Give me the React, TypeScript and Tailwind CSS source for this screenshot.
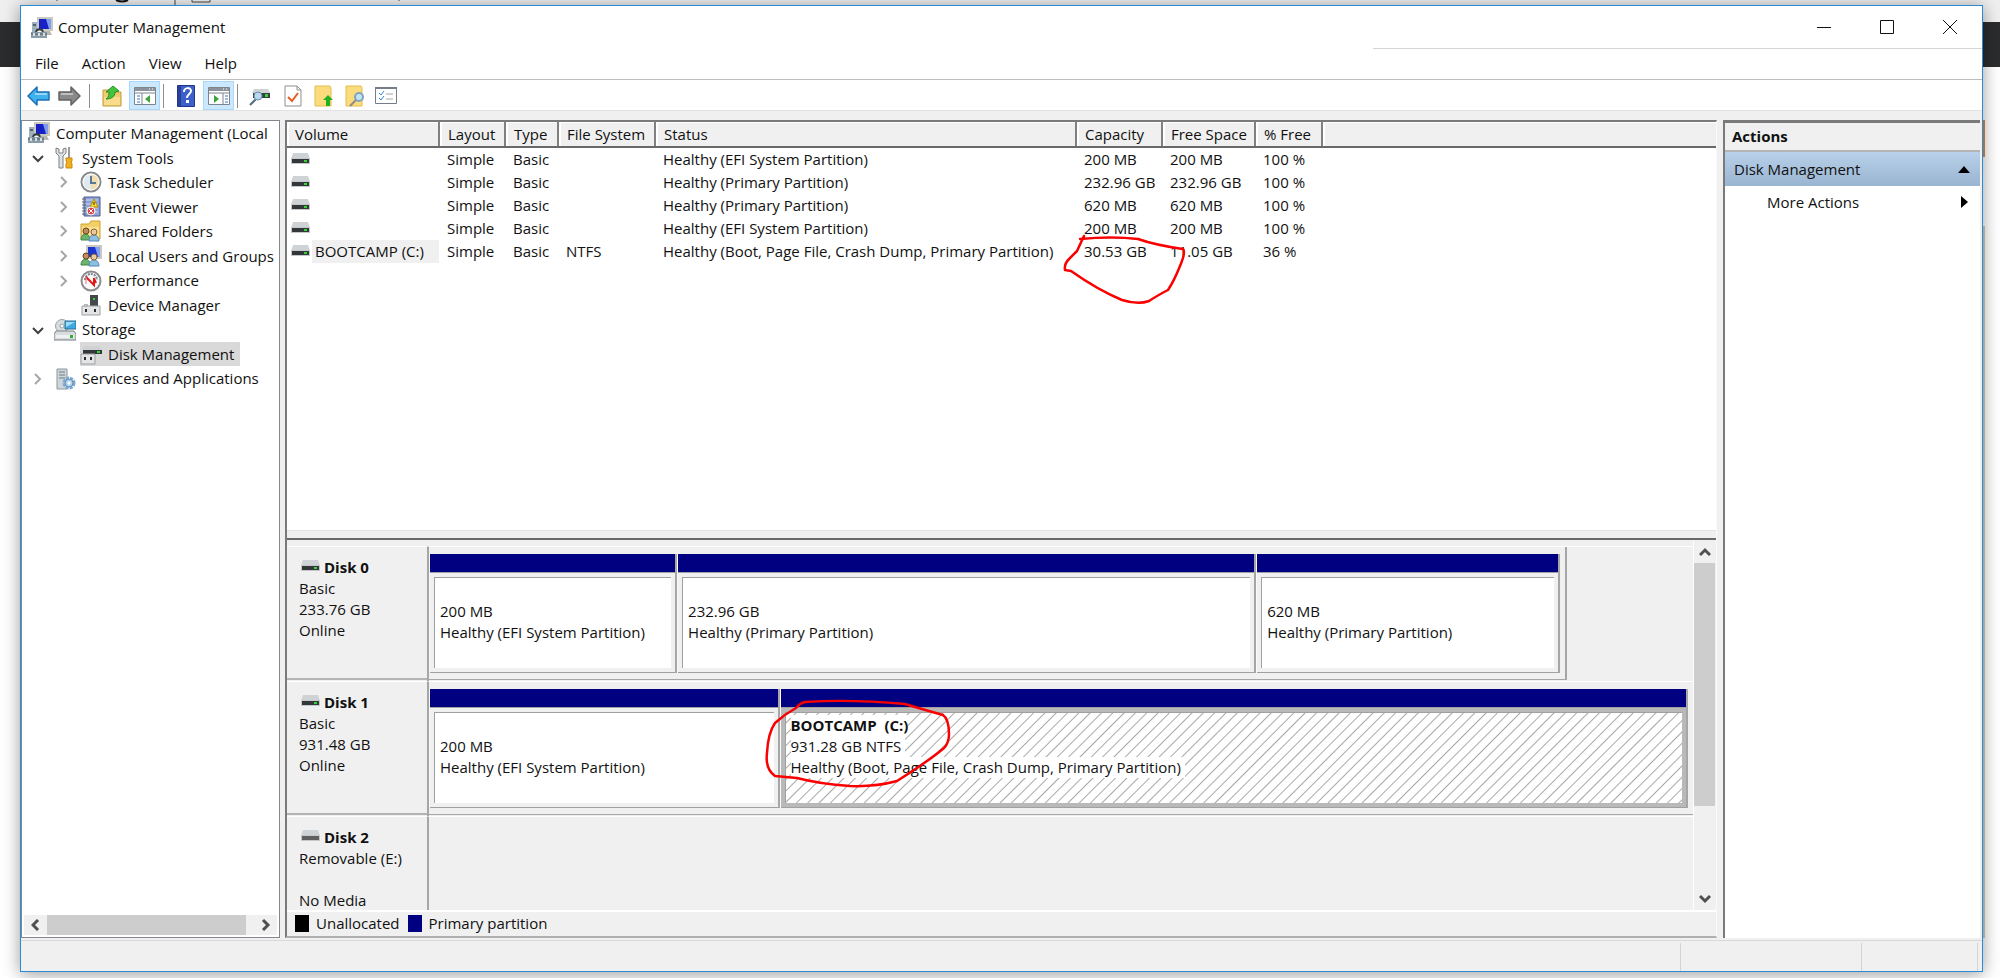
import type { ReactNode } from 'react';

const volumes = [
  { name: '', fs: '', status: 'Healthy (EFI System Partition)', capacity: '200 MB', free: '200 MB', percent: '100 %' },
  { name: '', fs: '', status: 'Healthy (Primary Partition)', capacity: '232.96 GB', free: '232.96 GB', percent: '100 %' },
  { name: '', fs: '', status: 'Healthy (Primary Partition)', capacity: '620 MB', free: '620 MB', percent: '100 %' },
  { name: '', fs: '', status: 'Healthy (EFI System Partition)', capacity: '200 MB', free: '200 MB', percent: '100 %' },
  { name: 'BOOTCAMP (C:)', fs: 'NTFS', status: 'Healthy (Boot, Page File, Crash Dump, Primary Partition)', capacity: '30.53 GB', free: '11.05 GB', percent: '36 %' },
];

const columns = ['Volume', 'Layout', 'Type', 'File System', 'Status', 'Capacity', 'Free Space', '% Free', ''];

function ComputerIcon() {
  return (
    <svg width="22" height="22" viewBox="0 0 22 22" className="shrink-0">
      <path d="M6 0h16v14H6z" fill="#c9c9bd" />
      <path d="M8 2h12v10H8z" fill="#1620c4" />
      <path d="M15 2h5v10h-2z" fill="#7f9bf0" />
      <path d="M13 14h6l2 4h-8z" fill="#b9b9b0" />
      <path d="M1 5h5v11H1z" fill="#9fb0bd" />
      <path d="M2 7h3v2H2z" fill="#4d6676" />
      <path d="M5 16c0-5 7-5 7 0" fill="none" stroke="#333c44" strokeWidth="2" />
      <path d="M0 15h16v6H0z" fill="#8a9ca7" />
      <path d="M0 17h16" stroke="#4f606b" />
      <path d="M3 16v3M8 16v3M13 16v3" stroke="#d7e0e6" strokeWidth="2" />
    </svg>
  );
}

function ToolsIcon() {
  return (
    <svg width="22" height="22" viewBox="0 0 22 22" className="shrink-0">
      <path d="M2 1v5l3 3v12h4V9l3-3V1l-3 1v4H5V2z" fill="#dfe1e3" stroke="#7d8185" />
      <path d="M14 0h2v11h-2z" fill="#9a9a9a" />
      <path d="M12 11h6v3l-1 1 1 2v4h-6v-4l1-2-1-1z" fill="#f2b01e" stroke="#c98708" />
    </svg>
  );
}

function ClockIcon() {
  return (
    <svg width="22" height="22" viewBox="0 0 22 22" className="shrink-0">
      <circle cx="11" cy="11" r="9.5" fill="#dfe9f2" stroke="#87898b" strokeWidth="2" />
      <path d="M11 11V3a8 8 0 0 1 0 16z" fill="#f3deb0" />
      <circle cx="11" cy="11" r="8" fill="none" stroke="#fff" />
      <path d="M11 5v7h5" fill="none" stroke="#5d7892" strokeWidth="2" />
    </svg>
  );
}

function EventIcon() {
  return (
    <svg width="22" height="22" viewBox="0 0 22 22" className="shrink-0">
      <path d="M4 1h16v19H4z" fill="#8fa3d4" stroke="#4a5a91" />
      <path d="M6 4h12M6 8h12M6 12h12M6 16h12" stroke="#cdd8f2" />
      <path d="M2 3h4M2 6h4M2 9h4M2 12h4M2 15h4M2 18h4" stroke="#5c6675" />
      <path d="M14 3l4 8h-8z" fill="#ffd92e" stroke="#b08a00" />
      <path d="M14 6v3" stroke="#222" />
      <circle cx="11" cy="15" r="4" fill="#d84545" stroke="#fff" />
      <path d="M9 13l4 4M13 13l-4 4" stroke="#fff" />
    </svg>
  );
}

function People() {
  return (
    <>
      <path d="M1 20c0-8 9-8 9 0z" fill="#69b56d" stroke="#3f8347" />
      <path d="M9 21c0-8 10-8 10 0z" fill="#8dbfe3" stroke="#5588b3" />
      <circle cx="6" cy="11" r="3" fill="#c48d57" stroke="#66441f" />
      <circle cx="14" cy="12" r="3" fill="#edc9a0" stroke="#86602f" />
    </>
  );
}

function SharedIcon() {
  return (
    <svg width="22" height="22" viewBox="0 0 22 22" className="shrink-0">
      <path d="M1 4h8l2-3h9v18H1z" fill="#f3cf67" stroke="#d1a12e" />
      <path d="M2 7h17v11H2z" fill="#fbe192" />
      <People />
    </svg>
  );
}

function UsersIcon() {
  return (
    <svg width="22" height="22" viewBox="0 0 22 22" className="shrink-0">
      <path d="M6 0h16v14H6z" fill="#c9c9bd" />
      <path d="M8 2h12v10H8z" fill="#1c35cf" />
      <path d="M15 2h5v10h-2z" fill="#85a1f4" />
      <People />
    </svg>
  );
}

function PerformanceIcon() {
  return (
    <svg width="22" height="22" viewBox="0 0 22 22" className="shrink-0">
      <circle cx="11" cy="11" r="9.5" fill="#fbfbfb" stroke="#8a8c8e" strokeWidth="2" />
      <path d="M5 10a6 6 0 0 1 12 0" fill="none" stroke="#7d868d" strokeWidth="2" strokeDasharray="2 1" />
      <path d="M6 7l8 8V8l2 5" fill="none" stroke="#e01a1a" strokeWidth="2" />
      <path d="M6 7v7" stroke="#e87070" />
    </svg>
  );
}

function DeviceIcon() {
  return (
    <svg width="22" height="22" viewBox="0 0 22 22" className="shrink-0">
      <path d="M10 1h8v11h-8z" fill="#44484b" />
      <path d="M13 4h2v2h-2z" fill="#35d435" />
      <path d="M2 12h18v9H2z" fill="#e3e4e5" stroke="#9da0a3" />
      <path d="M4 10h4v3H4z" fill="#b6babd" />
      <path d="M5 15h2v3H5zM14 15h2v3h-2z" fill="#2b2b2b" />
    </svg>
  );
}

function StorageIcon() {
  return (
    <svg width="22" height="22" viewBox="0 0 22 22" className="shrink-0">
      <circle cx="8" cy="7" r="6.5" fill="#d5dde0" stroke="#98a2a7" />
      <circle cx="8" cy="7" r="2" fill="#f8f8f8" stroke="#98a2a7" />
      <path d="M11 2h11v8H11z" fill="#3fa9dd" stroke="#2c6f96" />
      <path d="M12 3h9l-9 5z" fill="#9bdcf7" />
      <path d="M2 12h18l2 3v6H0v-6z" fill="#d9dcde" stroke="#7b8083" />
      <path d="M2 16h18v3H2z" fill="#eff1f2" />
      <path d="M16 16h3v3h-3z" fill="#2fae2f" />
    </svg>
  );
}

function DiskMgmtIcon() {
  return (
    <svg width="22" height="22" viewBox="0 0 22 22" className="shrink-0">
      <path d="M4 3h16l2 4H2z" fill="#cfd2d4" />
      <path d="M3 7h19v4H3z" fill="#33373a" />
      <path d="M17 8h3v2h-3z" fill="#35d435" />
      <path d="M1 11h14v10H1z" fill="#e3e4e5" stroke="#9da0a3" />
      <path d="M4 14h2v3H4zM10 14h2v3h-2z" fill="#2b2b2b" />
    </svg>
  );
}

function ServicesIcon() {
  return (
    <svg width="22" height="22" viewBox="0 0 22 22" className="shrink-0">
      <path d="M3 1h10v20H3z" fill="#cdd6da" stroke="#8b979d" />
      <path d="M5 4h6M5 7h6M5 10h6" stroke="#6b7a82" />
      <circle cx="15" cy="15" r="5" fill="none" stroke="#7fa9cf" strokeWidth="3" strokeDasharray="3 1" />
      <circle cx="15" cy="15" r="4" fill="#b6d2ea" stroke="#5e8fbc" />
      <circle cx="15" cy="15" r="1.5" fill="#fff" />
    </svg>
  );
}

function DriveIcon({ off }: { off?: boolean }) {
  return (
    <svg width="19" height="12" viewBox="0 0 19 12" className="shrink-0">
      <path d="M2 0h15l2 6H0z" fill="#cfd3d6" />
      <path d="M0 5h19v6H0z" fill="#c5c8ca" />
      <path d="M1 6h17v4H1z" fill={off ? '#606060' : '#33373a'} />
      {!off && <path d="M13 7h3v2h-3z" fill="#35d435" />}
    </svg>
  );
}

function Chevron({ open }: { open?: boolean }) {
  return (
    <svg width="14" height="14" viewBox="0 0 14 14" className="shrink-0">
      {open ? (
        <path d="M2 5l5 5 5-5" fill="none" stroke="#404040" strokeWidth="2" />
      ) : (
        <path d="M4 2l5 5-5 5" fill="none" stroke="#a6a6a6" strokeWidth="2" />
      )}
    </svg>
  );
}

function Arrow({ color, edge, flip }: { color: string; edge: string; flip?: boolean }) {
  return (
    <svg width="23" height="20" viewBox="0 0 23 20">
      <path
        d={flip ? 'M22 10l-9-9v5H1v8h12v5z' : 'M1 10l9-9v5h12v8H10v5z'}
        fill={color}
        stroke={edge}
        strokeWidth="1.5"
        strokeLinejoin="round"
      />
      <path d={flip ? 'M3 8h12' : 'M8 8h12'} stroke="#fff" strokeOpacity=".45" strokeWidth="2" />
    </svg>
  );
}

function PaneIcon({ right }: { right?: boolean }) {
  return (
    <svg width="22" height="18" viewBox="0 0 22 18">
      <path d="M.5.5h21v17H.5z" fill="#fff" stroke="#7c848e" />
      <path d="M1 1h20v3H1z" fill="#8b939d" />
      <path d="M15 2h1M18 2h1" stroke="#fff" />
      <path d="M1 6h20" stroke="#7c848e" />
      {right ? (
        <>
          <path d="M15 6v12" stroke="#7c848e" />
          <path d="M17 9h3M17 12h3M17 15h3" stroke="#3878c8" />
          <path d="M6 8l5 4-5 4z" fill="#3aa63a" />
        </>
      ) : (
        <>
          <path d="M8 6v12" stroke="#7c848e" />
          <path d="M3 9h3M3 12h3M3 15h3" stroke="#3878c8" />
          <path d="M16 8l-5 4 5 4z" fill="#3aa63a" />
        </>
      )}
    </svg>
  );
}

function ToolButton({ label, wide, active, children }: { label: string; wide?: boolean; active?: boolean; children: ReactNode }) {
  return (
    <button
      aria-label={label}
      className={`flex items-center justify-center self-stretch shrink-0 ${wide ? 'w-[35px]' : 'w-[31px]'} ${active ? 'bg-[#cce8ff] border border-[#a9d6fb]' : ''}`}
    >
      {children}
    </button>
  );
}

function Separator() {
  return <div className="w-px h-6 bg-[#8d8d8d] shrink-0" />;
}

function Toolbar() {
  return (
    <div className="flex items-center h-[31px] pl-[2px] pt-px border-b border-[#e2e2e2] shrink-0">
      <ToolButton label="Back"><Arrow color="#3fb2ee" edge="#1c70b8" /></ToolButton>
      <ToolButton label="Forward"><Arrow color="#8a8a8a" edge="#636363" flip /></ToolButton>
      <div className="w-1" />
      <Separator />
      <div className="w-1" />
      <ToolButton label="Up" wide>
        <svg width="20" height="22" viewBox="0 0 20 22">
          <path d="M1 5h6l2 2h10v14H1z" fill="#eecb6c" stroke="#c59c39" />
          <path d="M2 12h16v8H2z" fill="#f8dc8c" />
          <path d="M4 14c3-2 3-4 3-7H4l7-6 6 5-4 1c0 5-4 7-9 7z" fill="#43c23b" stroke="#26902a" />
        </svg>
      </ToolButton>
      <ToolButton label="Show console tree" active><PaneIcon /></ToolButton>
      <div className="w-[3px]" />
      <Separator />
      <div className="w-1" />
      <ToolButton label="Help" wide>
        <svg width="18" height="22" viewBox="0 0 18 22">
          <path d="M.5.5h17v21H.5z" fill="#3c5fc9" stroke="#22358a" />
          <path d="M1 1h3v20H1z" fill="#274099" />
          <path d="M7 7c0-5 7-5 7-1 0 3-4 3-4 7" fill="none" stroke="#fff" strokeWidth="2" />
          <path d="M9 15h3v3H9z" fill="#fff" />
        </svg>
      </ToolButton>
      <ToolButton label="Show action pane" active><PaneIcon right /></ToolButton>
      <div className="w-[3px]" />
      <Separator />
      <div className="w-1" />
      <ToolButton label="Rescan disks" wide>
        <svg width="22" height="20" viewBox="0 0 22 20">
          <path d="M5 3h14l2 4H3z" fill="#cfd3d6" />
          <path d="M4 7h17v5H4z" fill="#3a3e41" />
          <path d="M16 8h3v3h-3z" fill="#35d435" />
          <path d="M7 13l-6 6" stroke="#4f6b7f" strokeWidth="2" />
          <circle cx="9" cy="10" r="4" fill="#b7d8ee" stroke="#678fac" />
        </svg>
      </ToolButton>
      <ToolButton label="Properties">
        <svg width="18" height="22" viewBox="0 0 18 22">
          <path d="M1 1h12l4 4v16H1z" fill="#fff" stroke="#8f8f8f" />
          <path d="M13 1v4h4" fill="none" stroke="#8f8f8f" />
          <path d="M4 12l4 4 6-8" fill="none" stroke="#ea5a24" strokeWidth="2" />
        </svg>
      </ToolButton>
      <ToolButton label="Attach folder">
        <svg width="20" height="22" viewBox="0 0 20 22">
          <path d="M1 1h15l1 2v18H1z" fill="#fbdc7c" stroke="#e6bd4c" />
          <path d="M12 21v-6H9l5-5 5 5h-3v6z" fill="#22b01f" />
        </svg>
      </ToolButton>
      <ToolButton label="Find">
        <svg width="20" height="22" viewBox="0 0 20 22">
          <path d="M1 1h15l1 2v18H1z" fill="#fbdc7c" stroke="#e6bd4c" />
          <path d="M11 15l-6 6" stroke="#8c8c8c" strokeWidth="2" />
          <circle cx="14" cy="12" r="4" fill="#c6e4f4" stroke="#7fa5bb" strokeWidth="2" />
        </svg>
      </ToolButton>
      <ToolButton label="Options">
        <svg width="22" height="17" viewBox="0 0 22 17">
          <path d="M.5.5h21v16H.5z" fill="#fff" stroke="#757d86" />
          <path d="M0 1h22" stroke="#757d86" strokeWidth="2" />
          <path d="M4 6l2 2 3-4M4 11l2 2 3-4" fill="none" stroke="#2f86d8" />
          <path d="M11 7h7M11 12h7" stroke="#a5a5a5" />
        </svg>
      </ToolButton>
    </div>
  );
}

function TreeRow({ label, icon, level, state, selected }: { label: string; icon: ReactNode; level: number; state?: 'open' | 'closed'; selected?: boolean }) {
  const indent = ['pl-[6px]', 'pl-[9px]', 'pl-[35px]'][level];
  return (
    <li className={`flex items-center whitespace-nowrap min-h-0 ${indent}`}>
      {level > 0 && <span className="w-[14px] mr-[9px] shrink-0">{state && <Chevron open={state === 'open'} />}</span>}
      <span className={`flex items-center gap-[6px] h-6 pr-[6px] ${selected ? 'bg-[#d9d9d9]' : ''}`}>
        {icon}
        {label}
      </span>
    </li>
  );
}

function Tree() {
  return (
    <nav aria-label="Console tree" className="w-[259px] shrink-0 flex flex-col bg-white border border-[#828790] overflow-hidden">
      <ul className="grid auto-rows-fr h-[270px]">
        <TreeRow level={0} label="Computer Management (Local" icon={<ComputerIcon />} />
        <TreeRow level={1} state="open" label="System Tools" icon={<ToolsIcon />} />
        <TreeRow level={2} state="closed" label="Task Scheduler" icon={<ClockIcon />} />
        <TreeRow level={2} state="closed" label="Event Viewer" icon={<EventIcon />} />
        <TreeRow level={2} state="closed" label="Shared Folders" icon={<SharedIcon />} />
        <TreeRow level={2} state="closed" label="Local Users and Groups" icon={<UsersIcon />} />
        <TreeRow level={2} state="closed" label="Performance" icon={<PerformanceIcon />} />
        <TreeRow level={2} label="Device Manager" icon={<DeviceIcon />} />
        <TreeRow level={1} state="open" label="Storage" icon={<StorageIcon />} />
        <TreeRow level={2} selected label="Disk Management" icon={<DiskMgmtIcon />} />
        <TreeRow level={1} state="closed" label="Services and Applications" icon={<ServicesIcon />} />
      </ul>
      <div className="mt-auto mb-[2px] mx-[2px] flex h-5 bg-[#f0f0f0]">
        <button aria-label="Scroll left" className="w-[23px] flex items-center justify-center">
          <svg width="10" height="12" viewBox="0 0 10 12"><path d="M7 1L2 6l5 5" fill="none" stroke="#505050" strokeWidth="3" /></svg>
        </button>
        <div className="flex-1 bg-[#cdcdcd] mr-2" />
        <button aria-label="Scroll right" className="w-[23px] flex items-center justify-center">
          <svg width="10" height="12" viewBox="0 0 10 12"><path d="M2 1l5 5-5 5" fill="none" stroke="#505050" strokeWidth="3" /></svg>
        </button>
      </div>
    </nav>
  );
}

function VolumeList() {
  return (
    <div className="h-[408px] shrink-0 bg-white overflow-hidden">
      <table className="table-fixed w-full border-collapse text-left whitespace-nowrap">
        <colgroup>
          <col className="w-[152px]" />
          <col className="w-[66px]" />
          <col className="w-[53px]" />
          <col className="w-[97px]" />
          <col className="w-[421px]" />
          <col className="w-[86px]" />
          <col className="w-[93px]" />
          <col className="w-[67px]" />
          <col />
        </colgroup>
        <thead>
          <tr className="h-[25px] bg-[#f0f0f0]">
            {columns.map((c, i) => (
              <th key={i} className="p-0 pl-2 font-normal border-b-2 border-b-[#696969] border-r-2 border-r-[#808080] last:border-r-0 shadow-[inset_2px_1px_0_#fff]">
                {c}
              </th>
            ))}
          </tr>
        </thead>
        <tbody>
          {volumes.map((v, i) => (
            <tr key={i} className="h-[23px]">
              <td className="p-0 pl-1">
                <div className="flex items-center gap-[2px]">
                  <DriveIcon />
                  {v.name && <span className="bg-[#f0f0f0] flex-1 pl-[3px] leading-[23px]">{v.name}</span>}
                </div>
              </td>
              <td className="p-0 pl-2">Simple</td>
              <td className="p-0 pl-2">Basic</td>
              <td className="p-0 pl-2">{v.fs}</td>
              <td className="p-0 pl-2">{v.status}</td>
              <td className="p-0 pl-2">{v.capacity}</td>
              <td className="p-0 pl-2">{v.free}</td>
              <td className="p-0 pl-2">{v.percent}</td>
              <td className="p-0" />
            </tr>
          ))}
        </tbody>
      </table>
    </div>
  );
}

function Partition({ grow, title, size, status, selected }: { grow: string; title?: string; size: string; status: string; selected?: boolean }) {
  return (
    <div className={`${grow} min-w-0 flex flex-col border-l border-l-[#fafafa] border-r-2 border-r-[#a6a6a6]`}>
      <div className="h-[18px] bg-[#000080]" />
      <div className={`h-[101px] border-y border-[#a0a0a0] p-1 ${selected ? 'bg-[#b9b9b9]' : 'bg-[#f0f0f0]'}`}>
        <div
          className={`h-full flex flex-col items-start pt-[2px] pl-[5px] border-t border-l border-[#a0a0a0] whitespace-nowrap leading-[21px] ${selected ? 'bg-[repeating-linear-gradient(135deg,#fff_0px,#fff_6px,#a8a8a8_7px,#fff_8px)]' : 'bg-white'}`}
        >
          <span className="h-[21px] bg-white font-bold whitespace-pre">{title}</span>
          <span className="h-[21px] bg-white pr-1">{size}</span>
          <span className="h-[21px] bg-white pr-1">{status}</span>
        </div>
      </div>
    </div>
  );
}

function DiskRow({ name, lines, off, frame, children }: { name: string; lines: string[]; off?: boolean; frame?: string; children?: ReactNode }) {
  return (
    <div className="h-[135px] flex shrink-0">
      <div className="w-[140px] shrink-0 h-[134px] pl-3 pt-[10px] border-t border-t-white border-b-2 border-b-[#b4b4b4] leading-[21px] whitespace-nowrap">
        <div className="flex items-center gap-1 font-bold pl-[2px]">
          <span className="pb-1"><DriveIcon off={off} /></span>
          {name}
        </div>
        {lines.map((l, i) => (
          <div key={i} className="h-[21px]">{l}</div>
        ))}
      </div>
      <div className="flex-1 min-w-0 border-l-2 border-l-[#a6a6a6] border-t border-t-white">
        {children && <div className={`h-[133px] flex items-start pt-[7px] border-b border-[#a6a6a6] ${frame}`}>{children}</div>}
      </div>
    </div>
  );
}

function DiskMap() {
  return (
    <div className="flex-1 min-h-0 flex flex-col border-t-2 border-[#696969]">
      <div className="flex-1 min-h-0 flex">
        <div className="flex-1 min-w-0 overflow-hidden pt-[6px]">
          <DiskRow name="Disk 0" lines={['Basic', '233.76 GB', 'Online']} frame="w-[90%] pr-[5px] border-r-2">
            <Partition grow="flex-[248]" size="200 MB" status="Healthy (EFI System Partition)" />
            <Partition grow="flex-[583]" size="232.96 GB" status="Healthy (Primary Partition)" />
            <Partition grow="flex-[304]" size="620 MB" status="Healthy (Primary Partition)" />
          </DiskRow>
          <DiskRow name="Disk 1" lines={['Basic', '931.48 GB', 'Online']} frame="w-full pr-[5px]">
            <Partition grow="flex-[350]" size="200 MB" status="Healthy (EFI System Partition)" />
            <Partition
              grow="flex-[912]"
              title="BOOTCAMP  (C:)"
              size="931.28 GB NTFS"
              status="Healthy (Boot, Page File, Crash Dump, Primary Partition)"
              selected
            />
          </DiskRow>
          <DiskRow name="Disk 2" lines={['Removable (E:)', '', 'No Media']} off />
        </div>
        <div className="w-[23px] flex flex-col items-center border-l border-white pr-px">
          <button aria-label="Scroll up" className="h-[23px] flex items-center">
            <svg width="12" height="10" viewBox="0 0 12 10"><path d="M1 8l5-5 5 5" fill="none" stroke="#505050" strokeWidth="3" /></svg>
          </button>
          <div className="h-[243px] w-full bg-[#cdcdcd]" />
          <button aria-label="Scroll down" className="h-[23px] mt-auto flex items-center">
            <svg width="12" height="10" viewBox="0 0 12 10"><path d="M1 2l5 5 5-5" fill="none" stroke="#505050" strokeWidth="3" /></svg>
          </button>
        </div>
      </div>
      <div className="h-[26px] shrink-0 flex items-center pl-2 pb-[2px] border-t-2 border-white">
        <span className="w-[14px] h-[17px] bg-black mr-[7px]" />
        Unallocated
        <span className="w-[14px] h-[17px] bg-[#000080] ml-2 mr-[7px]" />
        Primary partition
      </div>
    </div>
  );
}

function Actions() {
  return (
    <aside className="w-[257px] shrink-0 bg-white border-t-[3px] border-l-2 border-[#7a7a7a]">
      <h2 className="h-[29px] pl-[7px] flex items-center bg-[#f0f0f0] border-b-2 border-[#b4b4b4] font-bold">Actions</h2>
      <button className="h-[34px] w-full flex items-center justify-between pl-[9px] pr-[10px] bg-linear-to-b from-[#b9d1ea] to-[#99b4d1]">
        Disk Management
        <svg width="12" height="7" viewBox="0 0 12 7"><path d="M0 7l6-7 6 7z" /></svg>
      </button>
      <button className="h-8 w-full flex items-center justify-between pl-[42px] pr-3">
        More Actions
        <svg width="7" height="12" viewBox="0 0 7 12"><path d="M0 0l7 6-7 6z" /></svg>
      </button>
    </aside>
  );
}

/* red pen circles over the two sizes that disagree */
function PenMarks() {
  return (
    <svg
      width="1431"
      height="816"
      viewBox="287 121 1431 816"
      className="absolute left-0 top-0 pointer-events-none"
      fill="none"
      stroke="#fb0000"
      strokeWidth="2.5"
      strokeLinejoin="round"
      strokeLinecap="round"
    >
      <path d="M1080 238Q1112 235 1138 238Q1155 244 1183 248Q1186 251 1180 265Q1174 280 1168 289Q1160 293 1149 300Q1138 304 1122 299Q1098 289 1071 270L1065 269Q1064 263 1069 258L1077 250L1084 235" />
      <path d="M805 701Q850 698 905 703Q925 709 943 714Q949 718 949 733Q949 742 944 747Q930 759 897 780Q875 786 850 785Q820 783 797 777L775 775Q765 768 767 752Q768 732 775 722Q785 713 796 707Q800 702 805 701" />
    </svg>
  );
}

export default function App() {
  return (
    <div className="relative h-screen overflow-hidden pl-5 pr-[17px] pt-[5px] pb-[6px] bg-[linear-gradient(#efefef_0px,#efefef_22px,#2b2c2e_22px,#2b2c2e_67px,#fff_67px)] font-['Open_Sans','Noto_Sans',sans-serif] text-[15px] text-[#111]">
      {/* bits of the browser behind the window */}
      <svg width="420" height="5" viewBox="0 0 420 5" className="absolute left-0 top-0" fill="none" stroke="#444">
        <path d="M116 0q6 3 12 0" strokeWidth="2" stroke="#111" />
        <path d="M175 0v5M192 0v2h18V0M57 0v1M399 0v1" />
      </svg>
      <div className="absolute right-[15px] top-[120px] w-[2px] h-[37px] bg-[#d98a4a]" />
      <div className="absolute right-[15px] top-[226px] w-[2px] bottom-10 bg-[#cfcfbf]" />

      <div className="relative h-full flex flex-col bg-[#f0f0f0] border border-[#2a8ad4] shadow-[0_2px_16px_rgba(0,0,0,0.4)]">
        <div className="bg-white shrink-0">
          <header className="flex items-center h-[43px]">
            <div className="flex-1 flex items-center gap-[5px] pl-[10px]">
              <ComputerIcon />
              <h1>Computer Management</h1>
            </div>
            <div className="w-[609px] h-full flex justify-end border-b border-[#d4d4d4] pr-px">
              <button aria-label="Minimize" className="w-[63px] flex items-center justify-center">
                <svg width="14" height="14" viewBox="0 0 14 14" stroke="#111"><path d="M0 7.5h14" /></svg>
              </button>
              <button aria-label="Maximize" className="w-[63px] flex items-center justify-center">
                <svg width="14" height="14" viewBox="0 0 14 14" stroke="#111" fill="none"><path d="M.5.5h13v13H.5z" /></svg>
              </button>
              <button aria-label="Close" className="w-[63px] flex items-center justify-center">
                <svg width="14" height="14" viewBox="0 0 14 14" stroke="#111"><path d="M0 0l14 14M14 0L0 14" /></svg>
              </button>
            </div>
          </header>
          <div className="flex items-center h-[31px] pl-[14px] pb-[2px] gap-[23px] border-b border-[#bdbdbd]">
            <button>File</button>
            <button>Action</button>
            <button>View</button>
            <button>Help</button>
          </div>
          <Toolbar />
        </div>

        <div className="flex-1 min-h-0 flex pt-[9px] pb-[2px] pr-[2px]">
          <Tree />
          <main className="relative flex-1 min-w-0 flex flex-col ml-[5px] mr-[6px] border-l-2 border-t-2 border-r border-b-2 border-l-[#7a7a7a] border-t-[#7a7a7a] border-r-[#fafafa] border-b-[#b0b0b0]">
            <VolumeList />
            <div className="h-2 shrink-0 border-t border-[#e3e3e3]" />
            <DiskMap />
            <PenMarks />
          </main>
          <Actions />
        </div>

        <footer className="h-[31px] shrink-0 flex border-t border-[#d9d9d9] pt-[2px]">
          <div className="flex-1 border-r border-[#d4d4d4]" />
          <div className="w-[181px] border-r border-[#d4d4d4]" />
          <div className="w-[116px] border-r border-[#d4d4d4] mr-1" />
        </footer>
      </div>
    </div>
  );
}
